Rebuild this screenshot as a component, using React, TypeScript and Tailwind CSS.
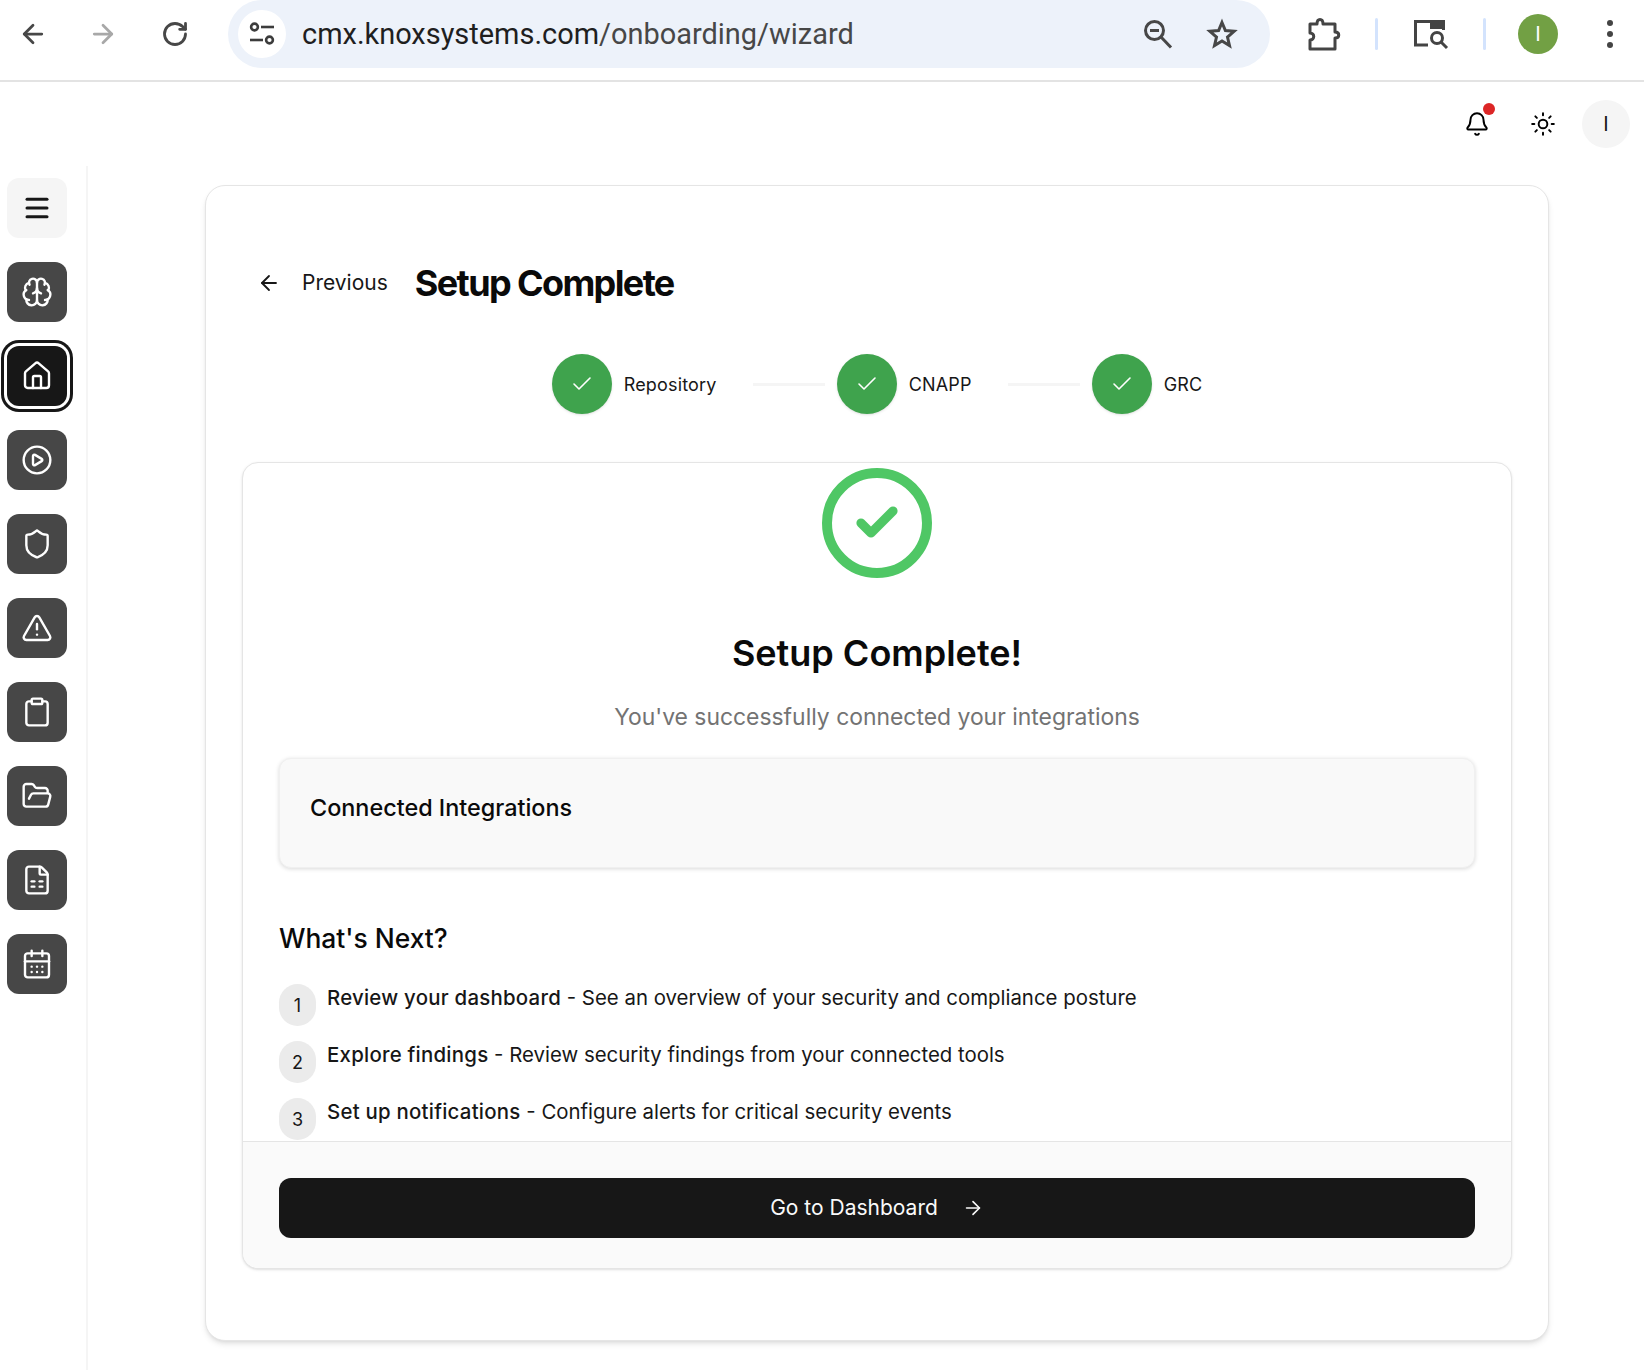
import {
  ArrowLeft,
  ArrowRight,
  Bell,
  Brain,
  CalendarDays,
  Check,
  CirclePlay,
  Clipboard,
  FileSpreadsheet,
  FolderOpen,
  House,
  Menu,
  RotateCw,
  Shield,
  Sun,
  TriangleAlert,
} from "lucide-react";

const navIcons = [Brain, House, CirclePlay, Shield, TriangleAlert, Clipboard, FolderOpen, FileSpreadsheet, CalendarDays];

const steps = ["Repository", "CNAPP", "GRC"];

const nextItems = [
  { num: 1, title: "Review your dashboard", text: "See an overview of your security and compliance posture" },
  { num: 2, title: "Explore findings", text: "Review security findings from your connected tools" },
  { num: 3, title: "Set up notifications", text: "Configure alerts for critical security events" },
];

function TuneIcon() {
  return (
    <svg width="28" height="28" viewBox="0 0 28 28" fill="none" stroke="#3c3c3c" strokeWidth="2.6">
      <circle cx="6.5" cy="7" r="3.4" />
      <path d="M13 7h13" />
      <path d="M2 20h13" />
      <circle cx="21.5" cy="20" r="3.4" />
    </svg>
  );
}

function ZoomOutIcon() {
  return (
    <svg width="30" height="30" viewBox="0 0 30 30" fill="none" stroke="#474747" strokeWidth="3">
      <circle cx="11.5" cy="11.5" r="9" />
      <path d="M7 11.5h9" />
      <path d="M18 18l10 10.5" />
    </svg>
  );
}

function StarIcon() {
  return (
    <svg width="32" height="32" viewBox="0 0 32 32" fill="none" stroke="#474747" strokeWidth="3" strokeLinejoin="miter">
      <path d="M16 4.5l3.4 8.1 8.7.7-6.6 5.7 2 8.5L16 22.9l-7.5 4.6 2-8.5-6.6-5.7 8.7-.7z" />
    </svg>
  );
}

function PuzzleIcon() {
  return (
    <svg width="34" height="34" viewBox="0 0 34 34" fill="none" stroke="#444" strokeWidth="3" strokeLinejoin="round">
      <path d="M3 7h7c0-6 6-6 6 0h12v8c5 0 5 6 0 6v11H3v-9c5 0 5-7 0-7z" />
    </svg>
  );
}

function PanelSearchIcon() {
  return (
    <svg width="36" height="32" viewBox="0 0 36 32" fill="none" stroke="#444" strokeWidth="3">
      <path d="M15 27H2.5V3.5h28V12" />
      <path d="M17 2h15v9H17z" fill="#444" stroke="none" />
      <circle cx="24" cy="20" r="5.5" />
      <path d="M28 24l6 6" />
    </svg>
  );
}

function BrowserBar() {
  return (
    <div className="flex h-[82px] items-start border-b-2 border-[#e3e3e3] bg-white">
      <div className="flex h-[68px] w-[228px] shrink-0 items-center pl-[18px] text-[#474747]">
        <ArrowLeft size={30} strokeWidth={2.2} />
        <ArrowRight size={30} strokeWidth={2.2} className="ml-[40px] text-[#a8a8a8]" />
        <RotateCw size={28} strokeWidth={2.4} className="ml-[43px]" />
      </div>
      <div className="flex h-[68px] w-[1042px] shrink-0 items-center rounded-full bg-[#edf2fa] pl-[10px] pr-[32px]">
        <div className="flex h-[48px] w-[48px] items-center justify-center rounded-full bg-white">
          <TuneIcon />
        </div>
        <div className="ml-[16px] flex-1 pt-[1px] font-['Roboto',sans-serif] text-[28.95px] leading-none text-[#1f1f1f]">
          cmx.knoxsystems.com<span className="text-[#474747]">/onboarding/wizard</span>
        </div>
        <ZoomOutIcon />
        <div className="ml-[33px]">
          <StarIcon />
        </div>
      </div>
      <div className="flex h-[68px] flex-1 items-center text-[#444]">
        <div className="ml-[37px]"><PuzzleIcon /></div>
        <div className="ml-[34px] h-[32px] w-[3px] rounded-full bg-[#d3e3fd]" />
        <div className="ml-[35px]"><PanelSearchIcon /></div>
        <div className="ml-[34px] h-[32px] w-[3px] rounded-full bg-[#d3e3fd]" />
        <div className="ml-[32px] flex h-[40px] w-[40px] items-center justify-center rounded-full bg-[#72a044] font-['Roboto',sans-serif] text-[20px] text-white">
          I
        </div>
        <div className="ml-[49px] flex flex-col gap-[5px]">
          <div className="h-[6px] w-[6px] rounded-full bg-[#444]" />
          <div className="h-[6px] w-[6px] rounded-full bg-[#444]" />
          <div className="h-[6px] w-[6px] rounded-full bg-[#444]" />
        </div>
      </div>
    </div>
  );
}

function TopBar() {
  return (
    <div className="flex h-[84px] items-start justify-end pr-[14px] pt-[18px]">
      <div className="relative mr-[40px] mt-[11px]">
        <Bell size={26} strokeWidth={1.8} className="text-black" />
        <div className="absolute -right-[5px] -top-[8px] h-[12px] w-[12px] rounded-full bg-[#dc2626]" />
      </div>
      <Sun size={26} strokeWidth={1.8} className="mr-[26px] mt-[11px] text-black" />
      <div className="flex h-[48px] w-[48px] items-center justify-center rounded-full bg-[#f5f5f5] text-[20px] text-[#171717]">
        I
      </div>
    </div>
  );
}

function Sidebar() {
  return (
    <div className="flex h-[1204px] w-[88px] shrink-0 flex-col gap-[24px] border-r-2 border-[#f5f5f5] pl-[7px] pt-[12px]">
      <div className="flex h-[60px] w-[60px] items-center justify-center rounded-[12px] bg-[#f5f5f5] text-[#171717]">
        <Menu size={30} strokeWidth={2.4} />
      </div>
      {navIcons.map((Icon, i) => (
        <div
          key={i}
          className={
            i === 1
              ? "flex h-[60px] w-[60px] items-center justify-center rounded-[12px] bg-[#171717] text-white ring-[3px] ring-[#171717] ring-offset-[3px] ring-offset-white"
              : "flex h-[60px] w-[60px] items-center justify-center rounded-[12px] bg-[#474747] text-white"
          }
        >
          <Icon size={32} strokeWidth={1.8} />
        </div>
      ))}
    </div>
  );
}

function Stepper() {
  return (
    <div className="mt-[43px] flex items-center justify-center">
      {steps.map((step, i) => (
        <div key={step} className="flex items-center">
          {i > 0 && <div className="ml-[36px] mr-[12px] h-[3px] w-[72px] bg-[#f5f5f5]" />}
          <div className="flex h-[60px] w-[60px] items-center justify-center rounded-full bg-[#3fa34d] text-white shadow-sm">
            <Check size={24} strokeWidth={1.6} />
          </div>
          <span className="ml-[12px] text-[18px] tracking-[0.01em] text-[#171717]">{step}</span>
        </div>
      ))}
    </div>
  );
}

function SuccessCard() {
  return (
    <div className="mt-[48px] flex h-[807px] flex-col overflow-hidden rounded-[16px] border border-[#e5e5e5] bg-white shadow-sm">
      <div className="flex flex-1 flex-col overflow-hidden px-[36px] pt-[5px]">
        <div className="mx-auto flex h-[110px] w-[110px] shrink-0 items-center justify-center rounded-full border-[10px] border-[#4fc765] text-[#4fc765]">
          <Check size={48} strokeWidth={4.6} />
        </div>
        <h2 className="mt-[52px] text-center text-[36px] font-semibold leading-[46px] text-[#0a0a0a]">Setup Complete!</h2>
        <p className="mt-[24px] text-center text-[22.9px] leading-[34px] text-[#737373]">
          You've successfully connected your integrations
        </p>
        <div className="mt-[24px] h-[110px] shrink-0 rounded-[12px] border border-[#f0f0f0] bg-[#f9f9f9] px-[30px] pt-[33px] shadow-[0_1px_4px_rgba(0,0,0,0.15)]">
          <h3 className="text-[23.4px] font-medium leading-[32px] text-[#0a0a0a]">Connected Integrations</h3>
        </div>
        <h3 className="mt-[53px] text-[26.4px] font-medium leading-[34px] text-[#0a0a0a]">What's Next?</h3>
        <div className="mt-[29px] flex flex-col gap-[15px]">
          {nextItems.map((item) => (
            <div key={item.num} className="flex items-start gap-[11px]">
              <div className="flex h-[42px] w-[37px] shrink-0 items-center justify-center rounded-full bg-[#ebebeb] text-[18px] text-[#171717]">
                {item.num}
              </div>
              <p className="text-[20.4px] leading-[28px] text-[#171717]">
                <span className="font-medium tracking-[0.012em]">{item.title}</span> - {item.text}
              </p>
            </div>
          ))}
        </div>
      </div>
      <div className="flex h-[127px] shrink-0 flex-col border-t border-[#e5e5e5] bg-[#fafafa] px-[36px] pt-[36px]">
        <button className="flex h-[60px] w-full items-center justify-center gap-[24px] rounded-[12px] bg-[#171717] text-[21px] text-[#fafafa]">
          Go to Dashboard
          <ArrowRight size={22} strokeWidth={1.8} />
        </button>
      </div>
    </div>
  );
}

export default function App() {
  return (
    <div className="h-[1370px] w-[1644px] overflow-hidden bg-white font-['Inter',sans-serif]">
      <BrowserBar />
      <TopBar />
      <div className="flex">
        <Sidebar />
        <div className="pl-[117px] pt-[19px]">
          <div className="h-[1156px] w-[1344px] rounded-[20px] border border-[#e5e5e5] bg-white px-[36px] pt-[69px] shadow-md">
            <div className="flex h-[56px] items-center">
              <ArrowLeft size={24} strokeWidth={1.8} className="ml-[15px] text-[#171717]" />
              <span className="ml-[21px] text-[21px] text-[#171717]">Previous</span>
              <h1 className="ml-[27px] text-[36px] font-bold tracking-[-0.045em] text-[#0a0a0a]">Setup Complete</h1>
            </div>
            <Stepper />
            <SuccessCard />
          </div>
        </div>
      </div>
    </div>
  );
}
